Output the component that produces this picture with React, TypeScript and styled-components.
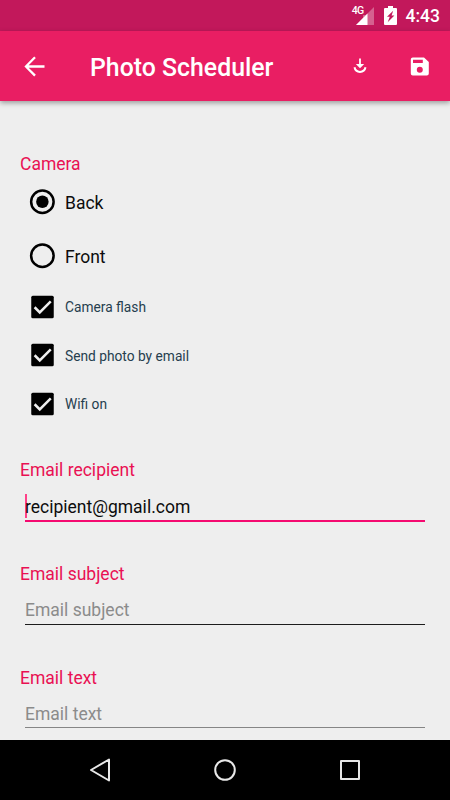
import React from "react";
import styled, { createGlobalStyle } from "styled-components";

const GlobalStyle = createGlobalStyle`
  * { box-sizing: border-box; }
  body { margin: 0; background: #eeeeee; font-family: Roboto, sans-serif; }
  svg { display: block; flex: none; }
`;

const Screen = styled.div`
  width: 450px;
  height: 800px;
  display: flex;
  flex-direction: column;
  background: #eeeeee;
  overflow: hidden;
`;

const StatusBar = styled.div`
  height: 31px;
  flex: none;
  display: flex;
  justify-content: flex-end;
  align-items: center;
  padding: 0 10px 0 0;
  background: #c2185b;
  color: #fff;
`;

const Network = styled.span`
  align-self: flex-start;
  padding-top: 5px;
  font-size: 10.5px;
  line-height: 12px;
  font-weight: 500;
  letter-spacing: -0.8px;
  margin-right: -7px;
`;

const BatteryIcon = styled.svg`
  margin-left: 9.5px;
`;

const Clock = styled.span`
  font-size: 17.5px;
  font-weight: 500;
  line-height: 20px;
  margin: 1px 0 0 8.7px;
`;

const AppBar = styled.header`
  height: 70px;
  flex: none;
  display: flex;
  align-items: center;
  padding: 0 18.5px 0 22px;
  background: #e91e63;
  color: #fff;
  box-shadow: 0 2px 5px rgba(0, 0, 0, 0.35);
  z-index: 1;
`;

const Title = styled.h1`
  margin: 4px 0 0 43px;
  flex: 1;
  font-size: 24.85px;
  line-height: 30px;
  font-weight: 500;
`;

const IconButton = styled.button<{ $gap?: number }>`
  display: flex;
  padding: 0;
  margin: 0 0 0 ${(p) => p.$gap ?? 0}px;
  border: 0;
  background: none;
  color: inherit;
`;

const Content = styled.main`
  flex: 1;
  min-height: 0;
  padding: 51px 25px 0 20px;
`;

const Label = styled.div`
  height: 24px;
  font-size: 17.5px;
  line-height: 24px;
  color: #e91153;
`;

const Option = styled.div<{ $h: number; $small?: boolean; $shift?: number }>`
  display: flex;
  align-items: center;
  height: ${(p) => p.$h}px;
  padding-left: 7px;
  gap: 8px;
  font-size: ${(p) => (p.$small ? 13.75 : 17.5)}px;
  color: ${(p) => (p.$small ? "#263e4e" : "#0c0c0c")};

  span {
    padding-top: ${(p) => p.$shift ?? 1}px;
  }
`;

const Field = styled.section<{ $top: number }>`
  padding-top: ${(p) => p.$top}px;
`;

const InputLine = styled.div<{ $line: string; $width: number; $hint?: boolean; $pad: number; $h: number }>`
  display: flex;
  align-items: flex-start;
  height: ${(p) => p.$h + p.$width}px;
  margin: 0 0 0 5px;
  padding-top: ${(p) => p.$pad}px;
  font-size: 17.5px;
  line-height: 24px;
  color: ${(p) => (p.$hint ? "#8b8b8b" : "#0c0c0c")};
  border-bottom: ${(p) => p.$width}px solid ${(p) => p.$line};
`;

const Caret = styled.i`
  width: 2px;
  height: 24px;
  margin: -1px -2px 0 0;
  background: #ff4088;
`;

const NavBar = styled.nav`
  height: 60px;
  flex: none;
  display: flex;
  justify-content: space-between;
  align-items: center;
  padding: 0 85px;
  background: #000;
`;

function Radio({ checked }: { checked?: boolean }) {
  return (
    <svg width="30" height="30" viewBox="0 0 24 24">
      <circle cx="12.3" cy="11.8" r="9" fill="none" stroke="#000" strokeWidth="2" />
      {checked && <circle cx="12.3" cy="11.8" r="5" />}
    </svg>
  );
}

function Check() {
  return (
    <svg width="30" height="30" viewBox="0 0 24 24">
      <rect x="3.4" y="3" width="18" height="18" rx="1.2" />
      <path d="M6.1 12.2l4.1 4.1 8.8-8.8" fill="none" stroke="#eee" strokeWidth="2" />
    </svg>
  );
}

export default function App() {
  return (
    <Screen>
      <GlobalStyle />
      <StatusBar>
        <Network>4G</Network>
        <svg width="18" height="18" viewBox="0 0 18 18">
          <path d="M18 0v18H0L7 11V8h3z" fill="#fff" fillOpacity=".32" />
          <path d="M11.5 6.5V18H0z" fill="#fff" />
        </svg>
        <BatteryIcon width="13" height="19" viewBox="0 0 13 19">
          <path
            fill="#fff"
            fillRule="evenodd"
            d="M4 0h5v2h3a1 1 0 0 1 1 1v15a1 1 0 0 1-1 1H1a1 1 0 0 1-1-1V3a1 1 0 0 1 1-1h3zM9.2 4.8L3 10.8h2.8l-2.1 5.4L10.4 9.4H7.6z"
          />
        </BatteryIcon>
        <Clock>4:43</Clock>
      </StatusBar>

      <AppBar>
        <IconButton aria-label="Back">
          <svg width="25" height="25" viewBox="0 0 24 24" fill="currentColor">
            <path d="M21.6 10.8H6.4l6.9-6.9-1.6-1.6L2.3 12l9.4 9.6 1.6-1.6-6.9-6.9h15.2z" />
          </svg>
        </IconButton>
        <Title>Photo Scheduler</Title>
        <IconButton aria-label="Download">
          <svg width="14" height="16" viewBox="0 0 14 16" fill="none" stroke="#fff">
            <path d="M7 .5v7" strokeWidth="1.8" />
            <path d="M2.8 6h8.4L7 10.3z" fill="#fff" stroke="none" />
            <path d="M1.5 9.3c.6 3 2.7 4.6 5.5 4.6s4.9-1.6 5.5-4.6" strokeWidth="2" />
          </svg>
        </IconButton>
        <IconButton $gap={39.5} aria-label="Save">
          <svg width="25" height="25" viewBox="0 0 25 25" fill="currentColor">
            <path
              fillRule="evenodd"
              d="M17 3.4H5.8a2 2 0 0 0-2 2v14a2 2 0 0 0 2 2h14a2 2 0 0 0 2-2V8zM12.8 18.8a3 3 0 1 1 0-6 3 3 0 0 1 0 6zM15.8 9H6V5.7h9.8z"
            />
          </svg>
        </IconButton>
      </AppBar>

      <Content>
        <Label>Camera</Label>
        <Option $h={52}><Radio checked /><span>Back</span></Option>
        <Option $h={55} $shift={2}><Radio /><span>Front</span></Option>
        <Option $h={48} $small $shift={0}><Check /><span>Camera flash</span></Option>
        <Option $h={48.5} $small><Check /><span>Send photo by email</span></Option>
        <Option $h={48.5} $small><Check /><span>Wifi on</span></Option>

        <Field $top={30}>
          <Label>Email recipient</Label>
          <InputLine $line="#f50a70" $width={2} $h={38} $pad={13}><Caret />recipient@gmail.com</InputLine>
        </Field>
        <Field $top={40}>
          <Label>Email subject</Label>
          <InputLine $line="#1c1c1c" $width={1} $h={38} $pad={12} $hint>Email subject</InputLine>
        </Field>
        <Field $top={41}>
          <Label>Email text</Label>
          <InputLine $line="#858585" $width={1} $h={37} $pad={12} $hint>Email text</InputLine>
        </Field>
      </Content>

      <NavBar>
        <svg width="30" height="30" viewBox="0 0 30 30" fill="none" stroke="#e8e8e8" strokeWidth="2" strokeLinejoin="round">
          <path d="M6 15L24 4.5v21z" />
        </svg>
        <svg width="30" height="30" viewBox="0 0 30 30" fill="none" stroke="#e8e8e8" strokeWidth="2">
          <circle cx="15" cy="15" r="9.8" />
        </svg>
        <svg width="30" height="30" viewBox="0 0 30 30" fill="none" stroke="#e8e8e8" strokeWidth="2" strokeLinejoin="round">
          <rect x="6" y="6" width="18" height="18" />
        </svg>
      </NavBar>
    </Screen>
  );
}
